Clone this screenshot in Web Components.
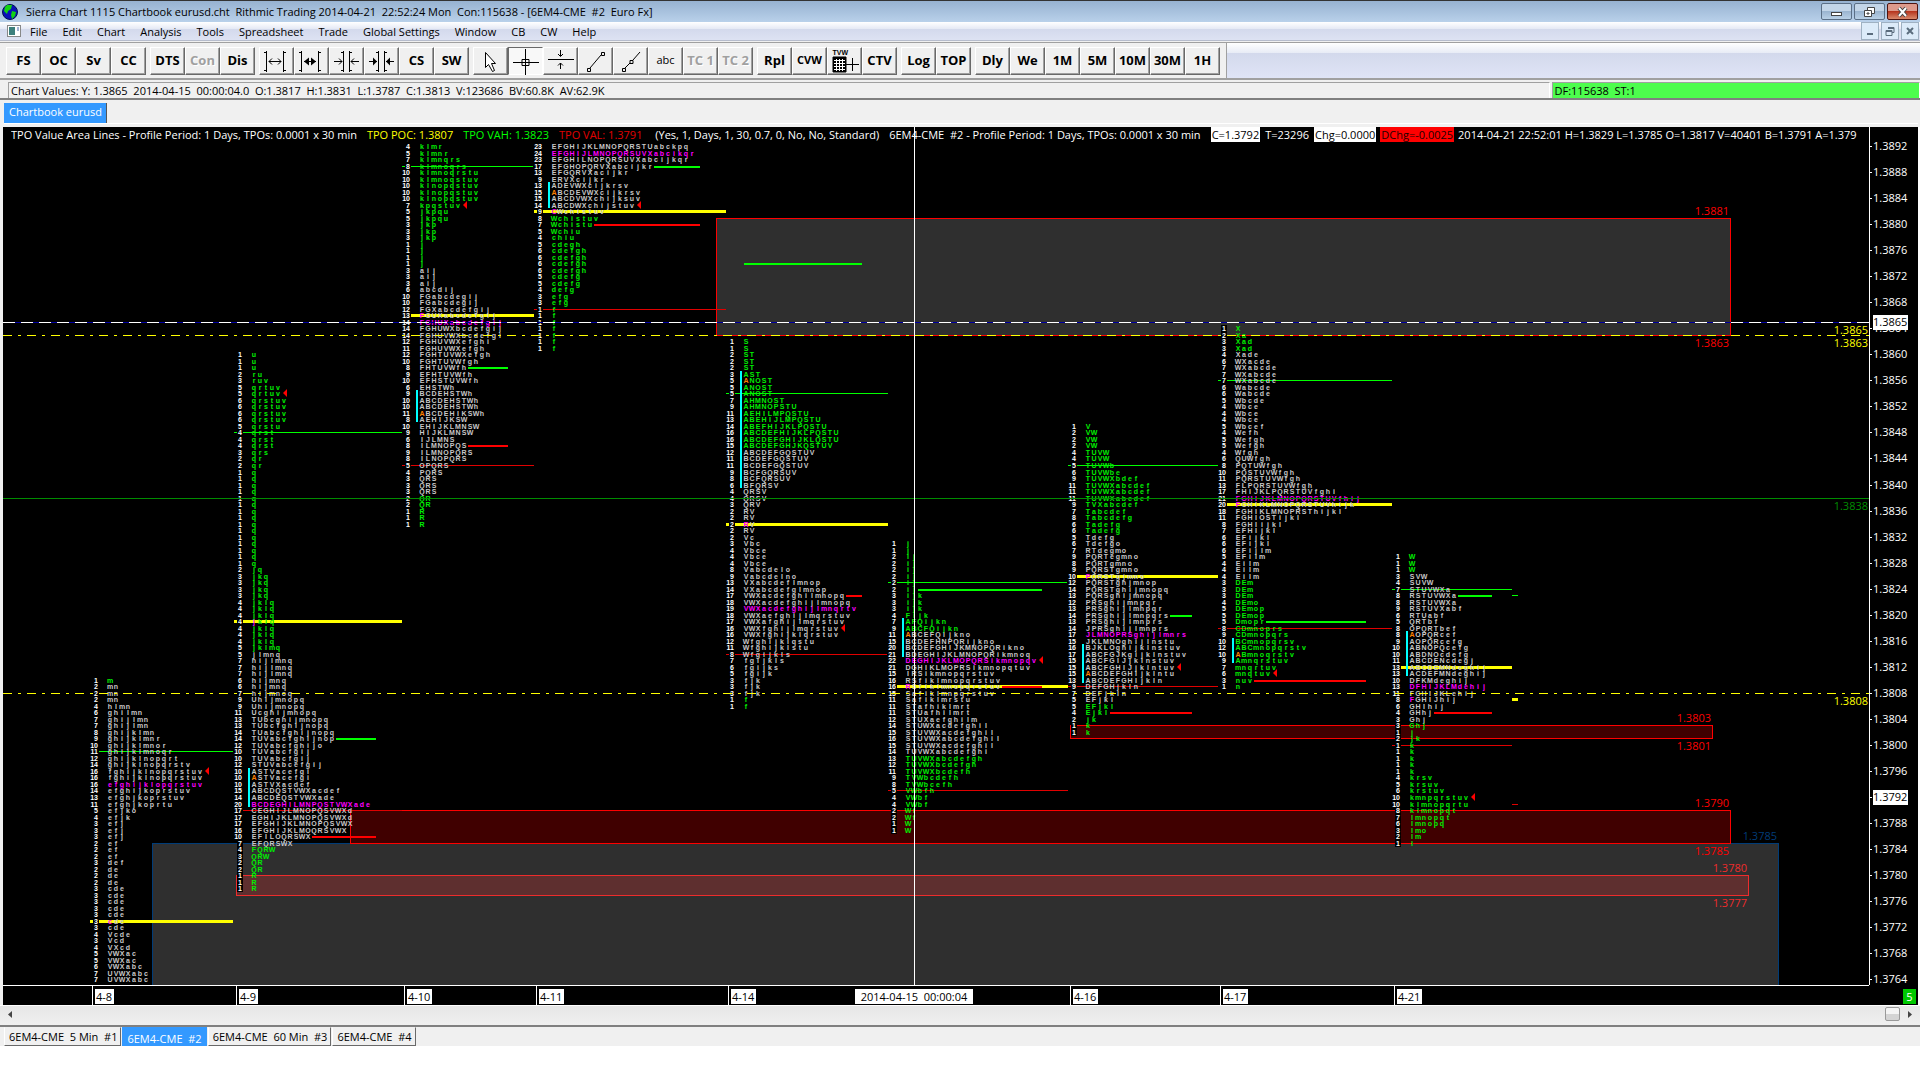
<!DOCTYPE html>
<html lang="en">
<head>
<meta charset="utf-8">
<title>Sierra Chart 1115 Chartbook eurusd.cht</title>
<style>
  html, body { height: 100%; margin: 0; }
  body {
    background: #fff;
    color: #000;
    font: 11px/15px "Open Sans", "Noto Sans", sans-serif;
  }
</style>
</head>
<body>
<sierra-app></sierra-app>

<script>
const ICONS = {
  widen: '<path d="M3.500 3v21M1 4.500h2M20.500 3v21M21 4.500h2M1 22.500h2M21 22.500h2M6 13.500h12M9 10.500l-3 3 3 3M15 10.500l3 3-3 3"/>',
  widenBold: '<path d="M3.500 3v21M1 4.500h2M20.500 3v21M21 4.500h2M1 22.500h2M21 22.500h2M6 13.500h12"/><path d="M11 9.500v8l-5-4zM13 9.500v8l5-4z" fill="#000" stroke="none"/>',
  narrow: '<path d="M10.500 3v21M16.500 3v21M10 4.500H8M17 4.500h2M10 22.500H8M17 22.500h2M1 13.500h8M6 10.500l3 3-3 3M26 13.500h-8M21 10.500l-3 3 3 3"/>',
  narrowBold: '<path d="M10.500 3v21M16.500 3v21M10 4.500H8M17 4.500h2M10 22.500H8M17 22.500h2M1 13.500h8M26 13.500h-8"/><path d="M5 9.500v8l4-4zM22 9.500v8l-4-4z" fill="#000" stroke="none"/>',
  pointer: '<path d="M8.500 4.500v15l3-3 4 7 2-1-3-7h4z" fill="#fff"/>',
  cross: '<path d="M1 14.500h26M13.500 1v26M10 11.500h7v6h-7z"/>',
  hline: '<path d="M1 11.500h26M13.500 2v6M11 6l2.500 2.500L16 6M13.500 21v-6M11 17.500l2.500-2.500 2.500 2.500"/>',
  line: '<path d="M8 20L19 7M5.500 20.500h3v3h-3zM19.500 4.500h3v3h-3z"/>',
  ray: '<path d="M8 20l5-5M16 12L23 4M5.500 20.500h3v3h-3zM13 12.500h3v3h-3z"/>',
  grid: '<path d="M2 9h13v15H2z" fill="#000"/><path d="M3 12.500h11M3 15.500h11M3 18.500h11M3 21.500h11M5.500 11v12M8.500 11v12M11.500 11v12" stroke="#fff"/><path d="M15 16.500h13M21.500 10v13"/>'
};

class TitleBar extends HTMLElement {
  connectedCallback() {
    this.attachShadow({ mode: 'open' }).innerHTML = `
      <style>
        :host {
          display: flex;
          align-items: center;
          height: 22px;
          box-sizing: border-box;
          padding: 0 2px;
          border-top: 1px solid #333;
          background: linear-gradient(#97b2d1, #b9d1ea);
        }
        .title { flex: 1; margin-left: 8px; white-space: pre; }
        .buttons { display: flex; gap: 2px; }
        button {
          display: grid;
          place-items: center;
          width: 31px;
          height: 17px;
          padding: 0;
          border: 1px solid #5b6f86;
          border-radius: 2px;
          background: linear-gradient(#c3d5e8 45%, #9bb5d0 50%, #b9d0e6);
        }
        .close { border-color: #4e1410; background: linear-gradient(#dd9a8c 45%, #b7361f 50%, #d98a6c); }
      </style>
      <svg width="16" height="18" viewBox="0 0 16 18" aria-hidden="true">
        <circle cx="8" cy="9" r="7.500" fill="#0a12b8" stroke="#001050"/>
        <path d="M5 2l5 0-1 4-3 2-1 3-3-3 1-4zM10 8l4 1-1 4-3 3-1-4z" fill="#12d312"/>
      </svg>
      <span class="title">Sierra Chart 1115 Chartbook eurusd.cht  Rithmic Trading 2014-04-21  22:52:24 Mon  Con:115638 - [6EM4-CME  #2  Euro Fx]</span>
      <div class="buttons">
        <button aria-label="Minimize"><svg width="13" height="12"><rect x="1.500" y="6.500" width="10" height="3" fill="#fff" stroke="#444"/></svg></button>
        <button aria-label="Restore"><svg width="13" height="12" fill="#fff" stroke="#444"><path d="M4.500 1.500h7v6h-7z"/><path d="M1.500 4.500h7v6h-7z"/><path d="M4 7h2v1H4z"/></svg></button>
        <button class="close" aria-label="Close"><svg width="13" height="12"><path d="M3 2l7 8M10 2l-7 8" stroke="#444" stroke-width="4"/><path d="M3 2l7 8M10 2l-7 8" stroke="#fff" stroke-width="2"/></svg></button>
      </div>`;
  }
}

class MenuBar extends HTMLElement {
  connectedCallback() {
    const items = ['File', 'Edit', 'Chart', 'Analysis', 'Tools', 'Spreadsheet', 'Trade', 'Global Settings', 'Window', 'CB', 'CW', 'Help'];
    this.attachShadow({ mode: 'open' }).innerHTML = `
      <style>
        :host {
          display: flex;
          align-items: center;
          height: 21px;
          box-sizing: border-box;
          padding: 0 1px 2px 7px;
          border-bottom: 1px solid #a0a0a0;
          box-shadow: inset 0 -1px #f0f0f0, inset 0 -2px #b6bccc;
          background: linear-gradient(#fff, #e6eaf5 33%, #d3d9ec 34%, #dfe4f4);
        }
        nav { display: flex; flex: 1; gap: 15px; margin-left: 9px; }
        a { color: #000; text-decoration: none; white-space: nowrap; }
        .buttons { display: flex; gap: 2px; }
        button {
          display: grid;
          place-items: center;
          width: 18px;
          height: 18px;
          padding: 0;
          border: 1px solid #9fb1c2;
          background: #dcebf9;
        }
      </style>
      <svg width="14" height="14" aria-hidden="true">
        <rect x="0.500" y="1.500" width="13" height="11" fill="#fff" stroke="#888"/>
        <rect x="2" y="3" width="6" height="8" fill="#3c7f7c"/><path d="M11 3v4" stroke="#46a"/>
      </svg>
      <nav>${items.map((t) => `<a href="#">${t}</a>`).join('')}</nav>
      <div class="buttons">
        <button aria-label="Minimize chart"><svg width="10" height="10"><path d="M2 8h6" stroke="#5b6d7e" stroke-width="2"/></svg></button>
        <button aria-label="Restore chart"><svg width="10" height="10" fill="none" stroke="#5b6d7e"><path d="M3 1.500h6v5H7M1 4.500h6v5H1zM3 2.500h6M1 5.500h6"/></svg></button>
        <button aria-label="Close chart"><svg width="10" height="10"><path d="M2 2l6 6M8 2l-6 6" stroke="#5b6d7e" stroke-width="2"/></svg></button>
      </div>`;
  }
}

class ToolButton extends HTMLElement {
  connectedCallback() {
    const icon = this.getAttribute('icon');
    const label = this.getAttribute('label') || this.textContent;
    const art = icon
      ? `<svg width="28" height="27" viewBox="0 0 28 27" fill="none" stroke="#000">${ICONS[icon]}</svg>`
      : '';
    this.attachShadow({ mode: 'open' }).innerHTML = `
      <style>
        :host { display: block; width: 35px; }
        button {
          display: grid;
          place-items: center;
          width: 100%;
          height: 28px;
          padding: 0 0 2px;
          border: 1px solid;
          border-color: #fff #696969 #696969 #fff;
          box-shadow: inset -1px -1px #a0a0a0;
          background: #f0f0f0;
          color: #000;
          font: bold 13px/16px "Open Sans", sans-serif;
          white-space: nowrap;
        }
        :host([pressed]) button {
          border-color: #696969 #fff #fff #696969;
          box-shadow: none;
          background: #f8f8f8;
        }
        :host([small]) button { font-size: 11px; }
        :host([thin]) button { font-size: 11px; font-weight: 400; }
        :host([disabled]) button { color: #a0a0a0; text-shadow: 1px 1px #fff; }
        .stack { display: grid; }
        .stack > * { grid-area: 1 / 1; }
        .stack .cap { font: bold 7px/7px "Liberation Sans", sans-serif; padding: 1px 0 0 2px; justify-self: start; }
      </style>
      <button aria-label="${label}" ${this.hasAttribute('disabled') ? 'disabled' : ''}>
        <span class="stack">${art}${icon === 'grid' ? '<span class="cap">TVW</span>' : ''}${icon ? '' : '<slot></slot>'}</span>
      </button>`;
  }
}

class ToolBar extends HTMLElement {
  connectedCallback() {
    this.attachShadow({ mode: 'open' }).innerHTML = `
      <style>
        :host {
          display: flex;
          height: 37px;
          box-sizing: border-box;
          border-bottom: 2px solid #a0a0a0;
          background: linear-gradient(#fff, #e8ecf6 28%, #d3d9ec 29%, #dfe4f6);
        }
        .bands {
          display: flex;
          align-items: center;
          gap: 4px;
          padding: 0 6px;
          border-right: 1px solid #a0a0a0;
          background: #f0f0f0;
        }
        .bands div { display: flex; }
      </style>
      <div class="bands">
        <div>
          <tool-button>FS</tool-button><tool-button>OC</tool-button><tool-button>Sv</tool-button><tool-button>CC</tool-button>
        </div>
        <div>
          <tool-button>DTS</tool-button><tool-button disabled>Con</tool-button><tool-button>Dis</tool-button>
        </div>
        <div>
          <tool-button icon="widen" label="Increase bar spacing"></tool-button>
          <tool-button icon="widenBold" label="Increase bar width"></tool-button>
          <tool-button icon="narrow" label="Decrease bar spacing"></tool-button>
          <tool-button icon="narrowBold" label="Decrease bar width"></tool-button>
          <tool-button>CS</tool-button><tool-button>SW</tool-button>
        </div>
        <div>
          <tool-button icon="pointer" label="Pointer"></tool-button>
          <tool-button icon="cross" label="Crosshair" pressed></tool-button>
          <tool-button icon="hline" label="Horizontal line"></tool-button>
          <tool-button icon="line" label="Line"></tool-button>
          <tool-button icon="ray" label="Ray"></tool-button>
          <tool-button thin>abc</tool-button><tool-button disabled>TC 1</tool-button><tool-button disabled>TC 2</tool-button>
        </div>
        <div>
          <tool-button>Rpl</tool-button><tool-button small>CVW</tool-button>
          <tool-button icon="grid" label="Trade window"></tool-button><tool-button>CTV</tool-button>
        </div>
        <div><tool-button>Log</tool-button><tool-button>TOP</tool-button></div>
        <div>
          <tool-button>Dly</tool-button><tool-button>We</tool-button><tool-button>1M</tool-button><tool-button>5M</tool-button>
          <tool-button>10M</tool-button><tool-button>30M</tool-button><tool-button>1H</tool-button>
        </div>
      </div>`;
  }
}

class StatusStrip extends HTMLElement {
  connectedCallback() {
    this.attachShadow({ mode: 'open' }).innerHTML = `
      <style>
        :host {
          display: flex;
          gap: 2px;
          height: 20px;
          box-sizing: border-box;
          padding: 2px 0 0 8px;
          border-bottom: 2px solid #808080;
          background: #f0f0f0;
          white-space: pre;
        }
        div {
          height: 16px;
          box-sizing: border-box;
          padding-left: 2px;
          border-top: 1px solid #a0a0a0;
          border-left: 1px solid #a0a0a0;
          border-right: 1px solid #fff;
        }
        .values { flex: 1544; }
        .feed { flex: 366; background: #4dfd4d; }
      </style>
      <div class="values">Chart Values: Y: 1.3865  2014-04-15  00:00:04.0  O:1.3817  H:1.3831  L:1.3787  C:1.3813  V:123686  BV:60.8K  AV:62.9K</div>
      <div class="feed">DF:115638  ST:1</div>`;
  }
}

class BookTabs extends HTMLElement {
  connectedCallback() {
    this.attachShadow({ mode: 'open' }).innerHTML = `
      <style>
        :host {
          display: block;
          height: 27px;
          box-sizing: border-box;
          padding: 3px 2px 0 4px;
          background: #f0f0f0;
        }
        div { display: flex; height: 20px; border-bottom: 1px solid #fff; }
        button {
          padding: 0 4px 4px 5px;
          border: 0;
          border-right: 1px solid #555;
          background: #39f;
          color: #fff;
          font: inherit;
        }
      </style>
      <div><button>Chartbook eurusd</button></div>`;
  }
}

// Price scale: y of a price (in ticks of 0.0001) inside the plot.
const TOP_PRICE = 3892;
const TICK = 6.51;
const priceY = (p) => Math.floor(19.5 + (TOP_PRICE - p) * TICK);

const HALF_HOUR = 6; // width of one letter cell

// One entry per session. edge is the right side of the count column; rows run
// down from top, one tick each ("q*15" repeats a row). green lists price ranges.
const SESSIONS = [
  {
    day: '4-8', edge: 96, end: 230, top: 3810,
    rows: 'm mn*3 hlmn ghilmn ghijlmn*2 ghijklmn ghijklmnr ghijklmnor ghijklmnoqr ghijklnopqrt ghijklnopqrstv fghijklnopqrstuv*2 efghijklopqrstuv efghijkoprstuv efghjkoprstuv efghjkoprtu efjko efjk efj*3 ef*3 def de*3 cde*7 Vcde Vcd VXcd VWXac*2 VWXabc UVWXabc*2',
    green: [[3810, 3810]], poc: 3794, mid: 3773, vah: 3799, arrow: 3796, lead: { 3773: 'm' }
  },
  {
    day: '4-9', edge: 240, end: 399, top: 3860,
    rows: 'u*3 ru ruv qrtuv*2 qrstuv*4 qrstu qrst*3 qrs qr*2 q*15 jq jkq*4 jklq*7 jklmq jlmnq hijlmnq*3 hijmnq*2 hijmnoq Uhijmnopq*2 Ucghijmnopq TUbcghijmnopq TUbcfghijnopq TUabcfghijnopq TUVabcfghijnop TUVabcfghijo TUVabcfgij*2 STUVabcefgij ASTVacefgi*2 ASTVXacdef ABCDQSTVWXacdef ABCDEQSTVWXade BCDEGHILMNPQSTVWXade CEGHIJLMNOPQSVWXd EGHIJKLMNOPQSVWXd EFGHIJKLMNOPQSVWX EFGHIJKLMOQRSVWX EFILOQRSWX EFQRSWX FQRW QRW QR*2 R*3',
    green: [[3860, 3815], [3784, 3778]], poc: 3791, mid: 3819, vah: 3848, val: 3790, arrow: 3854,
    bar: [3796, 3791], lead: { 3819: 'm', 3795: 'o' },
    dev: [['g', 3801, 333, 373], ['r', 3786, 309, 373]]
  },
  {
    day: '4-10', edge: 408, end: 531, top: 3892,
    rows: 'klmr klmnr klmnqrs klmnoqrs klmnoqrstu klmnoqstuv klnopqstuv*3 kpqstuv jkpqu*2 jkp*3 j*4 aij*3 abcdij FGabcdegij*2 FGXabcdefgij FGUXabcdefgij FGHUXabcdefgij FGHUWXbcdefgij FGHUVWXbcdefgi FGHUVWXefghi FGHUVWXefgh FGHTUVWXefgh FGHTUVWfgh FHTUVWfh EFHTUVWfh EFHSTUVWfh EHSTWh BCDEHSTWh ABCDEHSTWh*2 ABCDEHIKSWh AEHIJKSW EHIJKLMNSW HIJKLMNSW IJLMNS ILMNOPQS ILMNOPQRS ILNOPQRS OPQRS PQRS QRS*3 QR*2 R*3',
    green: [[3892, 3874], [3838, 3834]], poc: 3865, mid: 3866, vah: 3889, val: 3843, arrow: 3883,
    bar: [3854, 3850], lead: { 3866: 'm', 3851: 'o' },
    dev: [['g', 3858, 465, 505], ['r', 3846, 465, 505]]
  },
  {
    day: '4-11', edge: 540, end: 723, top: 3892,
    rows: 'EFGHIJKLMNOPQRSTUabckpq EFGHIJLMNOPQRSUVXabcikqr EFGHILNOPQRSUVXabcijkqr EFGHOPQRVXabcijkr EFGQRVXacijkr ERVXcijkr ADEVWXcijkrsv ABCDEVWXcijkrsv ABCDVWXchijksuv ABCDWXchijstuv CWchistuv Wchistuv Wchistu Wchiu chiu cdegh cdefgh*4 cdefg*2 defg efg*2 f*7',
    green: [[3881, 3861]], poc: 3891, mid: 3882, val: 3867, arrow: 3883,
    bar: [3886, 3883], lead: { 3882: 'm', 3885: 'o' },
    dev: [['g', 3889, 651, 697], ['r', 3880, 591, 697]]
  },
  {
    day: '4-14', edge: 732, end: 885, top: 3862,
    rows: 'S*2 ST*3 AST ANOST*3 AHMNOST AHMNOPSTU AEHILMPQSTU ABEHIJLMPQSTU ABEFHIJKLPQSTU ABCDEFHIJKLPQSTU ABCDEFGHIJKLQSTU ABCDEFGHJKQSTUV ABCDEFGQSTUV BCDEFGQSTUV*2 BCFGQRSUV BCFQRSUV BFQRSV QRSV*2 QRV RV*4 Vc Vbc Vbce*3 Vabcdelo Vabcdelno VXabcdeflmnop VXabcdefglmnop VWXacdefghilmnopq VWXacdefghijlmnopq VWXacdefghijlmnqrtv VWXaefghijlmqrstuv VWXafghijlmqrstuv VWXfghijlmqrstuv VWXfghijklqrstuv Wfghijklqstu Wfghijklstu Wfgijkls fgijkls fgijks fgijk fjk*3 f*2',
    green: [[3862, 3846], [3807, 3806]], poc: 3821, mid: 3834, vah: 3854, val: 3814, arrow: 3818,
    bar: [3857, 3840], lead: { 3834: 'm', 3856: 'o' },
    dev: [['g', 3874, 741, 859], ['r', 3823, 843, 859]]
  },
  {
    day: '', edge: 894, end: 1065, top: 3831,
    rows: 'j*2 ij*6 ijk*3 Fijk AFQijkn ABCFQijkn ABCEFQijkno BCDEFHNPQRijkno BCDEFGHIJKMNOPQRikno BDEGHIJKLMNOPQRikmnoq DEGHIJKLMOPQRSikmnopqv DGHIKLMOPRSikmnopqtuv IRSikmnopqrstuv RSfiklmnopqrstuv*2 Safiklmnpqrstuv Safiklmrstu STafhiklmrt STUafhilmrt STUXaefghilm STUWXacdefghil STUVWXacdefghil STUVWXabcdefghil STUVWXacdefghil TUVWXabcdefghi TUVWXabcdefgh TUVWXbcdefgh TUVWXbcdefh TVWbcdefh TVWbcefh VWbfh VWbf*2 Wf*2 W*2',
    green: [[3831, 3818], [3798, 3787]], poc: 3813, mid: 3809, vah: 3825, val: 3793, arrow: 3813,
    bar: [3819, 3814], lead: { 3809: 'm', 3817: 'o' }, trail: [3829, 3821],
    dev: [['g', 3824, 915, 1039], ['r', 3809, 999, 1039]]
  },
  {
    day: '4-16', edge: 1074, end: 1215, top: 3849,
    rows: 'V VW*3 TUVW*2 TUVWb TUVWbe TUVWXbdef TUVWXabcdef*3 TVXabcdef Tabcdef Tabcdefg Tadefg*2 Tdefg Tdefgo RTdegmo PQRTegmno PQRTgmno PQRSTgmno PQRSTgjmno PQRSTghjmnop PQRSTghijmnopq PQRSghijmnopq PRSghijmnpqr PRSghijlmnpqr PRSghijlmnpqrs PRSghijlmnprs JPRSghijlmnprs JLMNOPRSghijlmnrs JKLMNOghijlnstu BJKLOghijklnstuv ABCFGJKgijklnstuv ABCFGIJjklnstuv ABCFGHIJjklntuv ABCDEFGHIjklntu ABCDEFGHIjkln DEFGHjkln DEFjkln EFjkl*2 Ejkl jk k*2',
    green: [[3849, 3833], [3806, 3802]], poc: 3817, mid: 3826, vah: 3843, val: 3809, arrow: 3812,
    bar: [3815, 3810], lead: { 3826: 'm', 3811: 'o' },
    dev: [['g', 3820, 1167, 1189], ['r', 3805, 1107, 1189]]
  },
  {
    day: '4-17', edge: 1224, end: 1389, top: 3864,
    rows: 'X Xa Xad*2 Xade WXacde WXabcde*3 Wabcde*2 Wbcde Wbce*3 Wbcef Wefh Wefgh*2 Wfgh QUWfgh PQTUWfgh PQSTUVWfgh PQRSTUVWfgh FLPQRSTUVWfgh FHIJKLPQRSTUVfghi FGHIJKLMNOPQRSTUVfhij FGHIKLMNOPQRSTUVhijk FGHIKLMNOPRSThijkl FGHIOSTijkl FGHIijkl EFHIjkl EFijkl*2 EFijlm EFilm Eilm*3 DEm*3 DEmo DEmop*2 Dmopr CDmnoprs CDmnopqrs BCmnopqrsv ABCmnopqrstv ABmnoqrstv Amnqrstuv mnqrtuv mnqtuv nuv n',
    green: [[3864, 3861], [3825, 3809]], poc: 3838, mid: 3837, vah: 3856, val: 3818, arrow: 3811,
    bar: [3816, 3813], lead: { 3837: 'm', 3814: 'o' },
    dev: [['g', 3819, 1263, 1363], ['r', 3810, 1251, 1363]]
  },
  {
    day: '4-21', edge: 1398, end: 1509, top: 3829,
    rows: 'W*3 SVW SUVW STUVWXa RSTUVWXa*2 RSTUVXabf RTUabf QRTbf OPQRTbef AOPQRcef AOPQRcefg ABNOPQcefg ABDNOcdefg ABCDENcdegj ABCDEMNdeghij ACDEFMNdeghij DFKMdeghij DFHIJKLMdehij FGHIJKLehij FGHIJhij GHIhij GHhj Ghj*2 j jk k*5 krsv krsuv krstuv kmnpqrstuv klmnopqrtu klmnopqt lmnopqt lmnopq lmo lm l',
    green: [[3829, 3827], [3803, 3785]], poc: 3809, mid: 3812, vah: 3824, val: 3800, arrow: 3792,
    bar: [3817, 3811], lead: { 3807: 'm', 3817: 'o' },
    dev: [['g', 3823, 1455, 1489], ['r', 3805, 1431, 1489]]
  }
];

const rect = (x, y, w, h, fill) => `<rect x="${x}" y="${y}" width="${w}" height="${h}" fill="${fill}"/>`;

function expandRows(rows) {
  return rows.split(' ').flatMap((row) => {
    const [letters, times = 1] = row.split('*');
    return Array(Number(times)).fill(letters);
  });
}

function drawSession(s) {
  const under = [];
  const text = [];
  const over = [];
  const start = s.edge - 9;
  const first = s.edge + 11;

  if (s.vah) under.push(rect(start, priceY(s.vah), s.end - start, 1, '#0f0'));
  if (s.val) under.push(rect(start, priceY(s.val), s.end - start, 1, '#e00000'));
  under.push(rect(start, priceY(s.mid) - 1, s.end - start, 3, '#ff0'));
  (s.dev || []).forEach(([c, p, a, b]) => under.push(rect(a, priceY(p), b - a, 2, c === 'g' ? '#0f0' : '#f00')));
  if (s.bar) {
    const y = priceY(s.bar[0]) - 3;
    over.push(rect(s.edge + 5, y, 2, priceY(s.bar[1]) + 3 - y, '#0ff'));
  }
  if (s.trail) {
    const y = priceY(s.trail[0]) - 3;
    over.push(rect(s.edge + 17, y, 1, priceY(s.trail[1]) + 3 - y, '#f0f'));
  }

  expandRows(s.rows).forEach((letters, i) => {
    const price = s.top - i;
    const y = priceY(price);
    const count = String(letters.length);
    const isGreen = s.green.some(([hi, lo]) => price <= hi && price >= lo);
    const kind = price === s.poc ? 'm' : isGreen ? 'g' : 'w';
    const xs = [...letters].map((_, n) => first + n * HALF_HOUR).join(' ');
    const lead = s.lead && s.lead[price];
    const body = lead ? `<tspan class="${lead}">${letters[0]}</tspan>${letters.slice(1)}` : letters;
    const w = count.length * 4 + 2;
    under.push(rect(s.edge - w, y - 3, w, 7, '#000'));
    text.push(`<text class="n" x="${s.edge - 1}" y="${y + 3}">${count}</text>`);
    text.push(`<text class="${kind}" x="${xs}" y="${y + 3}">${body}</text>`);
    if (price === s.arrow) {
      const ax = first + letters.length * HALF_HOUR - 1;
      over.push(`<path d="M${ax} ${y}l4-4v8z" fill="#f00"/>`);
    }
  });
  return under.join('') + text.join('') + over.join('');
}

class TpoPlot extends HTMLElement {
  connectedCallback() {
    const zone = (x, hi, right, lo, fill, stroke) =>
      `<rect x="${x + 0.5}" y="${priceY(hi) + 0.5}" width="${right - x}" height="${priceY(lo) - priceY(hi)}" fill="${fill}" stroke="${stroke}"/>`;
    const tag = (x, y, fill, t) => `<text class="tag" x="${x}" y="${y}" fill="${fill}">${t}</text>`;
    const level = (p, stroke, dash) =>
      `<line x1="0" x2="100%" y1="${priceY(p) + 0.5}" y2="${priceY(p) + 0.5}" stroke="${stroke}" stroke-dasharray="${dash}"/>`;

    this.attachShadow({ mode: 'open' }).innerHTML = `
      <style>
        :host { display: block; overflow: hidden; min-width: 0; background: #000; }
        svg { display: block; width: 100%; height: 100%; }
        rect, line { shape-rendering: crispEdges; }
        text { font: bold 7px "Liberation Sans", sans-serif; text-anchor: middle; }
        text.n { text-anchor: end; fill: #fff; }
        text.tag { font: 11px "Open Sans", "Noto Sans", sans-serif; text-anchor: end; }
        .w { fill: #c8c8c8; }
        .g { fill: #00f000; }
        .m { fill: #f0f; }
        .o { fill: #ff8000; }
      </style>
      <svg role="img" aria-label="TPO profile chart">
        ${zone(713, 3881, 1727, 3863, '#2f2f2f', '#f00')}
        <rect x="149.500" y="${priceY(3785) + 0.5}" width="1626" height="400" fill="#2f2f2f" stroke="#003c78"/>
        ${zone(1067, 3803, 1709, 3801, '#400000', '#f00')}
        ${zone(347, 3790, 1727, 3785, '#400000', '#f00')}
        ${zone(233, 3780, 1745, 3777, '#5e2f2f', '#ee2c2c')}
        ${SESSIONS.map(drawSession).join('')}
        ${rect(1509, priceY(3823), 6, 1, '#0f0')}
        ${rect(1509, priceY(3807) - 1, 6, 3, '#ff0')}
        ${rect(1509, priceY(3791), 6, 1, '#e00000')}
        ${level(3865, '#0000a0', '')}
        ${level(3865, '#fff', '12 6')}
        ${level(3863, '#ff0', '9 6 3 6')}
        ${level(3808, '#ff0', '9 6 3 6')}
        ${level(3838, '#008c00', '')}
        <line x1="911.500" x2="911.500" y1="0" y2="100%" stroke="#fff"/>
        ${tag(1726, priceY(3881) - 3, '#f00', '1.3881')}
        ${tag(1726, priceY(3863) + 12, '#f00', '1.3863')}
        ${tag(1708, priceY(3803) - 3, '#f00', '1.3803')}
        ${tag(1708, priceY(3801) + 12, '#f00', '1.3801')}
        ${tag(1726, priceY(3790) - 3, '#f00', '1.3790')}
        ${tag(1726, priceY(3785) + 12, '#f00', '1.3785')}
        ${tag(1774, priceY(3785) - 3, '#003c78', '1.3785')}
        ${tag(1744, priceY(3780) - 3, '#ee2c2c', '1.3780')}
        ${tag(1744, priceY(3777) + 12, '#ee2c2c', '1.3777')}
        ${tag(1865, priceY(3865) + 12, '#ff0', '1.3865')}
        ${tag(1865, priceY(3863) + 12, '#ff0', '1.3863')}
        ${tag(1865, priceY(3838) + 12, '#008c00', '1.3838')}
        ${tag(1865, priceY(3808) + 12, '#ff0', '1.3808')}
      </svg>`;
  }
}

class PriceAxis extends HTMLElement {
  connectedCallback() {
    const ticks = [];
    for (let p = TOP_PRICE; p >= 3764; p -= 4) {
      const y = priceY(p);
      ticks.push(rect(0, y, 2, 1, '#fff') + `<text x="3" y="${y + 4}">1.${p}</text>`);
    }
    const box = (p) => rect(3, priceY(p) - 7, 35, 15, '#fff') + `<text x="3" y="${priceY(p) + 4}" fill="#000">1.${p}</text>`;
    this.attachShadow({ mode: 'open' }).innerHTML = `
      <style>
        :host { display: block; overflow: hidden; border-left: 1px solid #fff; }
        svg { display: block; width: 100%; height: 100%; fill: #fff; }
        text { font: 11px "Open Sans", "Noto Sans", sans-serif; }
      </style>
      <svg role="img" aria-label="Price scale">${ticks.join('')}${box(3865)}${box(3792)}</svg>`;
  }
}

class DateAxis extends HTMLElement {
  connectedCallback() {
    const labels = SESSIONS.filter((s) => s.day).map((s) => `<span style="left:${s.edge - 7}px">${s.day}</span>`);
    this.attachShadow({ mode: 'open' }).innerHTML = `
      <style>
        :host {
          display: block;
          position: relative;
          z-index: 0;
          border-top: 1px solid #fff;
          color: #000;
        }
        span {
          position: absolute;
          top: 0;
          height: 19px;
          border-left: 1px solid #fff;
          padding-left: 3px;
          line-height: 21px;
        }
        span::before { content: ''; position: absolute; inset: 3px -2px 1px 2px; background: #fff; z-index: -1; }
        .cursor { left: 852px; width: 118px; padding: 0; border: 0; text-align: center; white-space: pre; }
        .cursor::before { inset: 3px 0 1px; }
        .count {
          position: absolute;
          left: 100%;
          top: 3px;
          margin-left: 34px;
          width: 13px;
          font-weight: 400;
          line-height: 15px;
          background: #00c800;
          color: #fff;
          text-align: center;
        }
      </style>
      ${labels.join('')}
      <span class="cursor">2014-04-15  00:00:04</span>
      <b class="count">5</b>`;
  }
}

class StudyLine extends HTMLElement {
  connectedCallback() {
    this.attachShadow({ mode: 'open' }).innerHTML = `
      <style>
        :host { display: flex; overflow: hidden; color: #fff; white-space: pre; line-height: 15px; }
        span { flex: none; margin-right: 10px; }
        .poc { color: #ff0; }
        .vah { color: #0f0; }
        .val { color: #e00000; }
        .last { background: #fff; color: #000; }
        .down { background: #f00; color: #200; }
        .last, .trades, .down { padding: 0 1px; margin-right: 4px; }
      </style>
      <span>TPO Value Area Lines - Profile Period: 1 Days, TPOs: 0.0001 x 30 min</span>
      <span class="poc">TPO POC: 1.3807</span>
      <span class="vah">TPO VAH: 1.3823</span>
      <span class="val">TPO VAL: 1.3791</span>
      <span> (Yes, 1, Days, 1, 30, 0.7, 0, No, No, Standard)</span>
      <span>6EM4-CME  #2 - Profile Period: 1 Days, TPOs: 0.0001 x 30 min</span>
      <span class="last">C=1.3792</span>
      <span class="trades">T=23296</span>
      <span class="last">Chg=0.0000</span>
      <span class="down">DChg=-0.0025</span>
      <span>2014-04-21 22:52:01 H=1.3829 L=1.3785 O=1.3817 V=40401 B=1.3791 A=1.379</span>`;
  }
}

class TpoChart extends HTMLElement {
  connectedCallback() {
    this.attachShadow({ mode: 'open' }).innerHTML = `
      <style>
        :host {
          display: grid;
          grid-template: minmax(0, 1fr) 20px / minmax(0, 1fr) 49px;
          margin: 0 2px 0 0;
          border-left: 3px solid #f0f0f0;
          background: #000;
        }
        tpo-plot { grid-area: 1 / 1; }
        study-line { grid-area: 1 / 1; align-self: start; z-index: 1; margin-left: 8px; }
        price-axis { grid-area: 1 / 2; }
        date-axis { grid-area: 2 / 1; }
      </style>
      <tpo-plot></tpo-plot>
      <study-line></study-line>
      <price-axis></price-axis>
      <date-axis></date-axis>`;
  }
}

class ScrollStrip extends HTMLElement {
  connectedCallback() {
    this.attachShadow({ mode: 'open' }).innerHTML = `
      <style>
        :host {
          display: flex;
          align-items: center;
          height: 22px;
          box-sizing: border-box;
          padding-bottom: 3px;
          border-top: 1px solid #fff;
          border-bottom: 2px solid #808080;
          background: linear-gradient(#e6e6e6, #f0f0f0);
        }
        button { width: 20px; height: 16px; padding: 0; border: 0; background: none; }
        button svg { display: block; margin: auto; }
        .track { flex: 1; display: flex; justify-content: flex-end; }
        .thumb { width: 15px; height: 14px; box-sizing: border-box; border: 1px solid #999; border-radius: 2px; background: linear-gradient(#f4f4f4 50%, #d4d4d4 50%); }
      </style>
      <button aria-label="Scroll left"><svg width="4" height="7"><path d="M4 0v7L0 3.500z" fill="#444"/></svg></button>
      <div class="track"><div class="thumb"></div></div>
      <button aria-label="Scroll right"><svg width="4" height="7"><path d="M0 0v7l4-3.500z" fill="#444"/></svg></button>`;
  }
}

class ChartTabs extends HTMLElement {
  connectedCallback() {
    this.attachShadow({ mode: 'open' }).innerHTML = `
      <style>
        :host { display: flex; gap: 1px; height: 19px; padding-left: 4px; background: #f0f0f0; }
        button {
          padding: 0 3px 0 4px;
          border: 1px solid;
          border-color: #f0f0f0 #696969 #696969 #fff;
          background: #f0f0f0;
          color: #000;
          font: inherit;
          white-space: pre;
        }
        .on { padding: 3px 5px 0; border: 0; background: #39f; color: #fff; }
      </style>
      <button>6EM4-CME  5 Min  #1</button>
      <button class="on">6EM4-CME  #2</button>
      <button>6EM4-CME  60 Min  #3</button>
      <button>6EM4-CME  #4</button>`;
  }
}

class SierraApp extends HTMLElement {
  connectedCallback() {
    this.attachShadow({ mode: 'open' }).innerHTML = `
      <style>
        :host {
          display: flex;
          flex-direction: column;
          height: 100vh;
          box-sizing: border-box;
          padding-bottom: 34px;
          overflow: hidden;
        }
        tpo-chart { flex: 1; min-height: 0; }
      </style>
      <title-bar></title-bar>
      <menu-bar></menu-bar>
      <tool-bar></tool-bar>
      <status-strip></status-strip>
      <book-tabs></book-tabs>
      <tpo-chart></tpo-chart>
      <scroll-strip></scroll-strip>
      <chart-tabs></chart-tabs>`;
  }
}

customElements.define('title-bar', TitleBar);
customElements.define('menu-bar', MenuBar);
customElements.define('tool-button', ToolButton);
customElements.define('tool-bar', ToolBar);
customElements.define('status-strip', StatusStrip);
customElements.define('book-tabs', BookTabs);
customElements.define('tpo-plot', TpoPlot);
customElements.define('price-axis', PriceAxis);
customElements.define('date-axis', DateAxis);
customElements.define('study-line', StudyLine);
customElements.define('tpo-chart', TpoChart);
customElements.define('scroll-strip', ScrollStrip);
customElements.define('chart-tabs', ChartTabs);
customElements.define('sierra-app', SierraApp);
</script>
</body>
</html>
